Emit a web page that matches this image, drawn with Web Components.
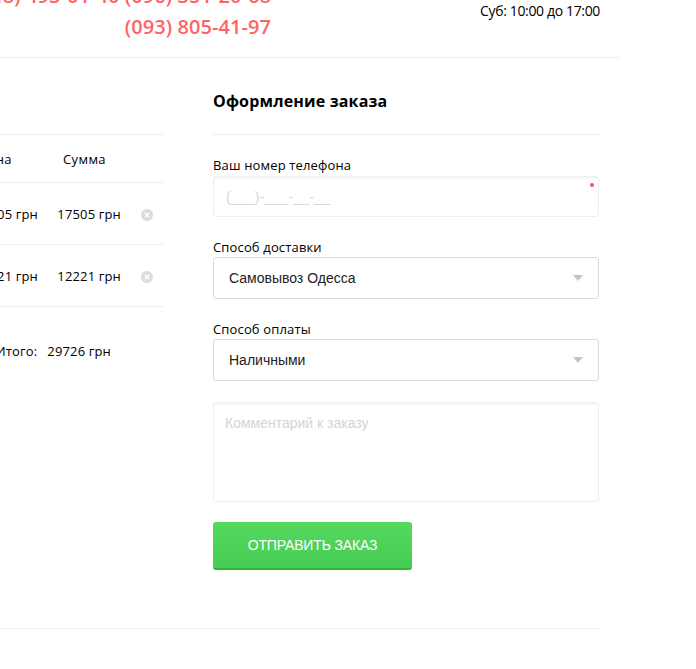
<!DOCTYPE html>
<html>
<head>
<meta charset="utf-8">
<style>
  html, body { margin: 0; padding: 0; background: #fff; overflow: hidden; height: 669px; }
  body { font-family: "Open Sans", sans-serif; color: #000; }
</style>
</head>
<body>
<template id="site-header-tpl">
  <style>
    :host { display: flex; justify-content: space-between; width: 620px; height: 57px; border-bottom: 1px solid #eee; box-sizing: content-box; overflow: hidden; }
    .phones { width: 271px; margin-top: -20px; display: flex; flex-direction: column; align-items: flex-end; flex: none; color: #ff6464; font-size: 20px; font-weight: 600; line-height: 31px; letter-spacing: 0.07px; white-space: nowrap; }
    .hours { margin: 1px 20px 0 0; font-size: 14px; line-height: 19px; letter-spacing: -0.35px; white-space: nowrap; }
  </style>
  <div class="phones"><slot></slot></div>
  <div class="hours"><slot name="hours"></slot></div>
</template>

<template id="cart-table-tpl">
  <style>
    :host { display: block; width: 163px; flex: none; margin-top: 76px; font-size: 13px; letter-spacing: 0.15px; overflow: hidden; }
    .rows { border-top: 1px solid #eee; }
    .total { display: flex; justify-content: flex-end; gap: 10px; margin-top: 35px; padding-right: 52px; line-height: 18px; white-space: nowrap; }
  </style>
  <div class="rows"><slot></slot></div>
  <div class="total"><span>Итого:</span><span>29726 грн</span></div>
</template>

<template id="cart-row-tpl">
  <style>
    :host { display: flex; align-items: center; justify-content: flex-end; height: 61px; border-bottom: 1px solid #eee; white-space: nowrap; font-size: 13px; color: #000; }
    :host([head]) { height: 47px; letter-spacing: 0.4px; }
    .price { width: 70px; flex: none; text-align: right; }
    :host([head]) .price { margin-right: 26px; }
    .sum { width: 83px; flex: none; text-align: right; }
    :host([head]) .sum { width: 68px; }
    .tail { width: 42px; flex: none; display: flex; justify-content: flex-end; margin-top: 2px; padding-right: 10px; box-sizing: border-box; }
    :host([head]) .tail { width: 57px; }
    svg { display: block; }
  </style>
  <span class="price"></span>
  <span class="sum"></span>
  <span class="tail"></span>
</template>

<template id="order-form-tpl">
  <style>
    :host { display: block; width: 387px; flex: none; margin-left: 50px; }
    h2 { margin: 0; padding: 32px 0 22px; font-size: 16px; line-height: 22px; font-weight: 700; letter-spacing: 0.17px; border-bottom: 1px solid #eee; }
    .fields { padding-top: 21px; display: flex; flex-direction: column; }
    button { display: block; width: 199px; height: 48px; margin-top: 20px; padding: 0; border: 0; border-bottom: 2px solid #2fb72f; border-radius: 3px; background: linear-gradient(#56d85e, #47cc55); color: #fff; font: 14px "Liberation Sans", sans-serif; letter-spacing: -0.15px; text-transform: uppercase; }
  </style>
  <h2><slot name="title"></slot></h2>
  <div class="fields"><slot></slot></div>
  <button type="button">Отправить заказ</button>
</template>

<template id="form-field-tpl">
  <style>
    :host { display: block; width: 386px; margin-bottom: 21px; }
    :host([kind="area"]) { margin-bottom: 0; }
    label { display: block; font-size: 13px; line-height: 18px; letter-spacing: 0.15px; margin-bottom: 1px; }
    :host([kind="phone"]) label { margin-bottom: 2px; }
    :host([kind="area"]) label { display: none; }
    .box { position: relative; box-sizing: border-box; height: 42px; display: flex; align-items: center; padding-left: 15px; border: 1px solid #d9d9d9; border-radius: 3px; font: 14px "Liberation Sans", sans-serif; color: #222; }
    :host([kind="phone"]) .box { height: 41px; padding-left: 12px; border-color: #eee; box-shadow: inset 0 2px 2px #f6f6f6; color: #d8d8d8; letter-spacing: 0.2px; }
    :host([kind="area"]) .box { height: 100px; align-items: flex-start; padding: 12px 11px; border-color: #eee; box-shadow: inset 0 2px 2px #f6f6f6; color: #d4d4d4; }
    .arrow { display: none; position: absolute; right: 15px; top: 17px; width: 0; height: 0; border: 5px solid transparent; border-top: 6px solid #c4c4c4; border-bottom: 0; }
    :host([kind="select"]) .arrow { display: block; }
    .req { display: none; position: absolute; right: 4px; top: 6px; width: 4px; height: 4px; border-radius: 50%; background: #ff4d55; }
    :host([kind="phone"]) .req { display: block; }
  </style>
  <label><slot name="label"></slot></label>
  <div class="box"><slot></slot><i class="arrow"></i><i class="req"></i></div>
</template>

<site-header>
  <span>(048) 493-01-40 (096) 351-20-68</span>
  <span>(093) 805-41-97</span>
  <span slot="hours">Суб: 10:00 до 17:00</span>
</site-header>
<main style="display:flex;width:600px">
  <cart-table>
    <cart-row head price="Цена" sum="Сумма"></cart-row>
    <cart-row price="17505 грн" sum="17505 грн"></cart-row>
    <cart-row price="12221 грн" sum="12221 грн"></cart-row>
  </cart-table>
  <order-form>
    <span slot="title">Оформление заказа</span>
    <form-field kind="phone"><span slot="label">Ваш номер телефона</span>(___)-___-__-__</form-field>
    <form-field kind="select"><span slot="label">Способ доставки</span>Самовывоз Одесса</form-field>
    <form-field kind="select"><span slot="label">Способ оплаты</span>Наличными</form-field>
    <form-field kind="area">Комментарий к заказу</form-field>
  </order-form>
</main>
<page-footer></page-footer>

<script>
  function shadow(el, id) {
    el.attachShadow({ mode: 'open' });
    el.shadowRoot.appendChild(document.getElementById(id).content.cloneNode(true));
  }

  class SiteHeader extends HTMLElement {
    constructor() { super(); shadow(this, 'site-header-tpl'); }
  }
  class CartTable extends HTMLElement {
    constructor() { super(); shadow(this, 'cart-table-tpl'); }
  }
  class CartRow extends HTMLElement {
    constructor() { super(); shadow(this, 'cart-row-tpl'); }
    connectedCallback() {
      this.shadowRoot.querySelector('.price').textContent = this.getAttribute('price');
      this.shadowRoot.querySelector('.sum').textContent = this.getAttribute('sum');
      if (!this.hasAttribute('head')) {
        this.shadowRoot.querySelector('.tail').innerHTML =
          '<svg width="12" height="12" viewBox="0 0 12 12"><circle cx="6" cy="6" r="6" fill="#dcdcdc"/><path d="M3.8 3.8l4.4 4.4M8.2 3.8L3.8 8.2" stroke="#fff" stroke-width="1.3"/></svg>';
      }
    }
  }
  class OrderForm extends HTMLElement {
    constructor() { super(); shadow(this, 'order-form-tpl'); }
  }
  class FormField extends HTMLElement {
    constructor() { super(); shadow(this, 'form-field-tpl'); }
  }
  class PageFooter extends HTMLElement {
    constructor() {
      super();
      this.attachShadow({ mode: 'open' });
      this.shadowRoot.innerHTML = '<style>:host{display:block;width:600px;margin-top:58px;border-top:1px solid #eee}</style>';
    }
  }

  customElements.define('site-header', SiteHeader);
  customElements.define('cart-table', CartTable);
  customElements.define('cart-row', CartRow);
  customElements.define('order-form', OrderForm);
  customElements.define('form-field', FormField);
  customElements.define('page-footer', PageFooter);
</script>
</body>
</html>
